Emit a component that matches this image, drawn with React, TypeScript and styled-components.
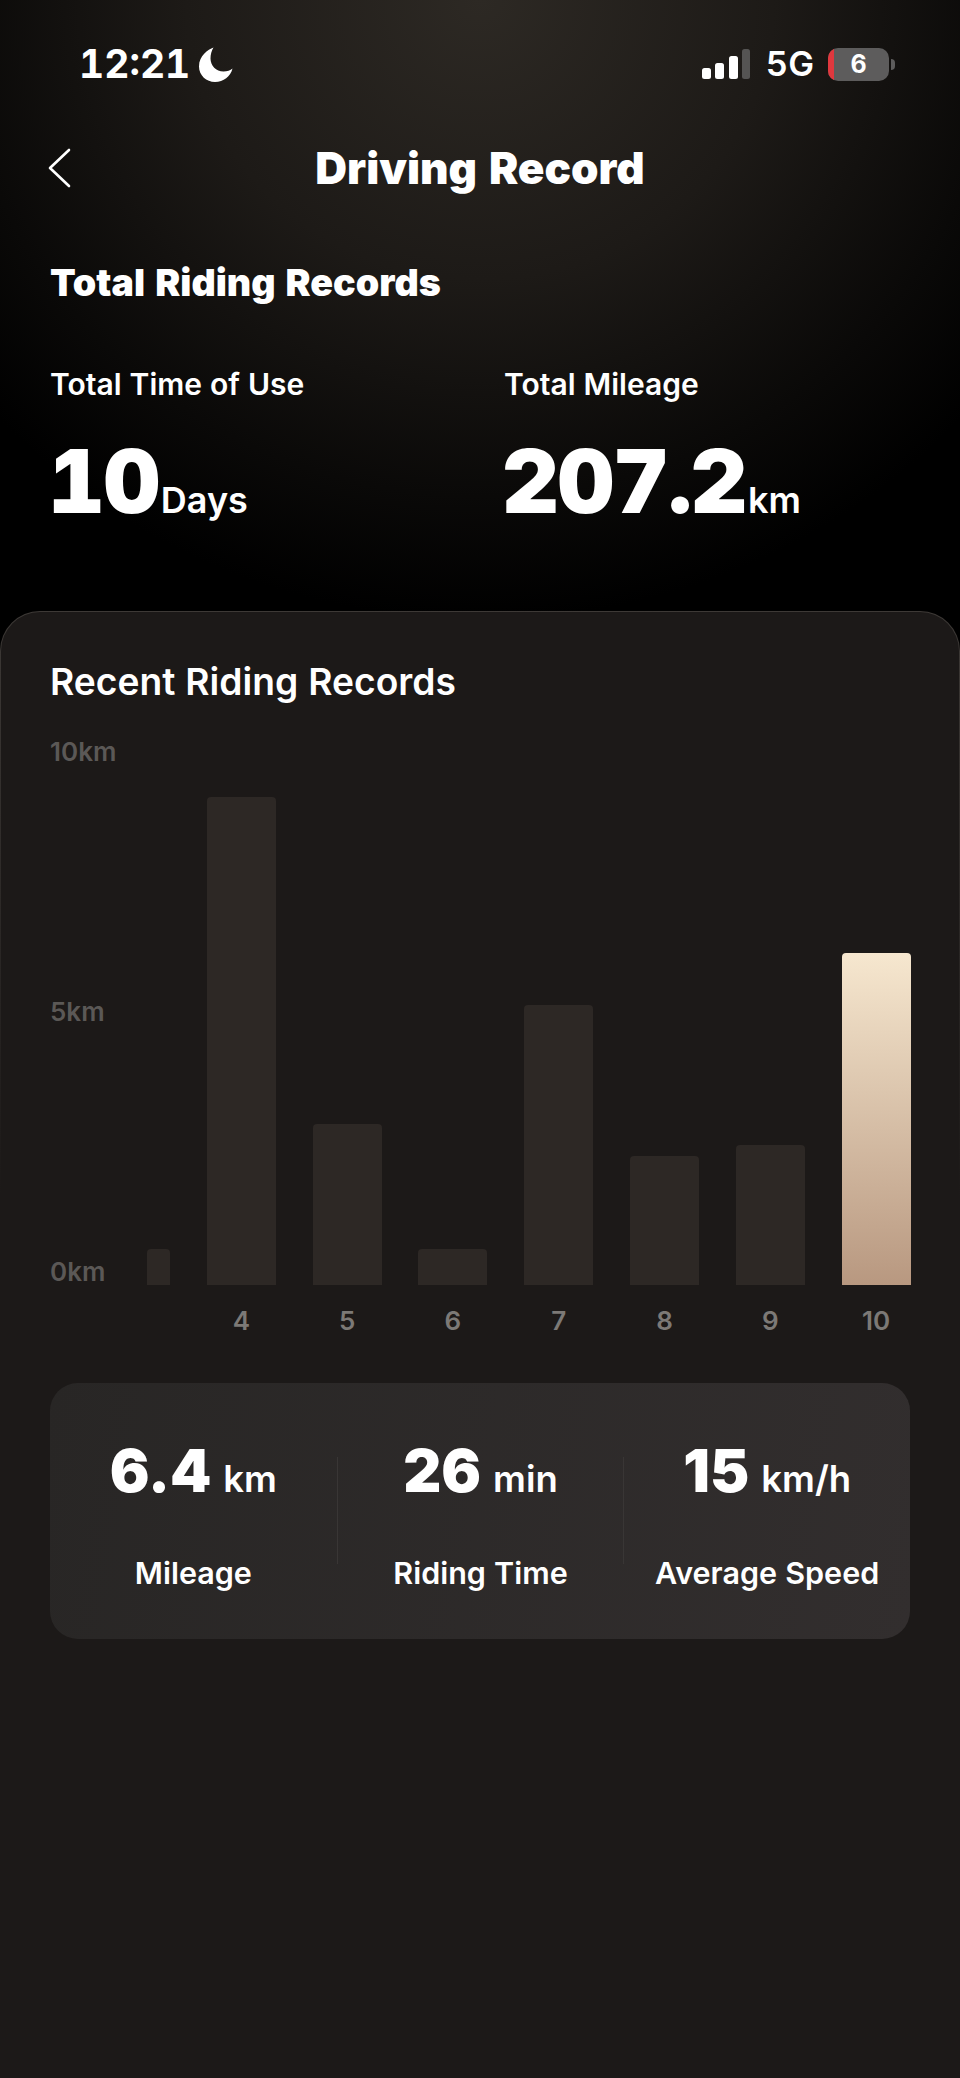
import React from 'react';
import styled, { createGlobalStyle } from 'styled-components';

const GlobalStyle = createGlobalStyle`
  html, body {
    margin: 0;
    padding: 0;
    background: #1c1918;
  }
  * {
    box-sizing: border-box;
  }
`;

const Page = styled.div`
  width: 960px;
  height: 2078px;
  display: flex;
  flex-direction: column;
  color: #fff;
  font-family: Inter, "Liberation Sans", sans-serif;
  font-variant-numeric: tabular-nums;
  background: #000 radial-gradient(ellipse 68% 100% at 50% 0%, #2d2924 0%, #1d1a17 45%, #0a0908 80%, #000 100%) no-repeat;
  background-size: 100% 620px;
`;

const StatusBar = styled.div`
  height: 134px;
  padding: 47px 65px 0 79px;
  display: flex;
  justify-content: space-between;
  align-items: flex-start;
`;

const TimeGroup = styled.div`
  display: flex;
  align-items: center;
  gap: 9px;
  height: 34px;
`;

const Clock = styled.span`
  font-size: 39px;
  font-weight: 700;
  line-height: 34px;
`;

const StatusIcons = styled.div`
  display: flex;
  align-items: center;
  height: 34px;
`;

const Network = styled.span`
  font-size: 34.5px;
  font-weight: 600;
  line-height: 34px;
  margin: 0 14px 0 16px;
`;

const Battery = styled.div`
  position: relative;
  width: 61px;
  height: 33px;
  border-radius: 10px;
  overflow: hidden;
  background: #5d5c5c;
  display: flex;
  align-items: center;
  justify-content: center;
  font-size: 25px;
  font-weight: 700;
`;

const BatteryLevel = styled.div`
  position: absolute;
  left: 0;
  top: 0;
  bottom: 0;
  width: 6px;
  background: #e0383e;
`;

const BatteryNub = styled.div`
  width: 4px;
  height: 11px;
  margin-left: 2px;
  border-radius: 0 4px 4px 0;
  background: #5d5c5c;
`;

const NavBar = styled.div`
  height: 68px;
  padding-left: 47px;
  display: flex;
  align-items: center;
  position: relative;
`;

const NavTitle = styled.h1`
  position: absolute;
  left: 0;
  right: 0;
  margin: 0;
  text-align: center;
  font-size: 44px;
  font-weight: 900;
  line-height: 68px;
`;

const Totals = styled.section`
  padding: 0 50px;
  height: 409px;
`;

const SectionTitle = styled.h2`
  margin: 56px 0 0;
  font-size: 37.6px;
  font-weight: 900;
  line-height: 50px;
`;

const TotalsRow = styled.div`
  margin-top: 58px;
  display: grid;
  grid-template-columns: 454px 1fr;
`;

const TotalLabel = styled.div`
  font-size: 30px;
  font-weight: 600;
  line-height: 36px;
`;

const TotalValue = styled.div`
  margin: 31px 0 0 -2px;
  display: flex;
  align-items: baseline;
  gap: 2px;
  font-size: 88px;
  font-weight: 900;
  line-height: 96px;
  letter-spacing: -1.3px;
`;

const TotalUnit = styled.span`
  font-size: 36px;
  font-weight: 600;
  line-height: 40px;
  letter-spacing: 0;
`;

const Card = styled.section`
  flex: 1;
  padding: 46px 49px 0;
  border: 1px solid transparent;
  border-bottom: 0;
  border-radius: 40px 40px 0 0;
  background:
    linear-gradient(#1c1918, #1c1918) padding-box,
    linear-gradient(#3d3936, #1c1918 40%) border-box;
`;

const CardTitle = styled.h2`
  margin: 0;
  font-size: 37.2px;
  font-weight: 600;
  line-height: 48px;
`;

const Chart = styled.div`
  margin-top: 31px;
  display: grid;
  grid-template-columns: 97px 1fr;
`;

const YAxis = styled.div`
  height: 550px;
  display: flex;
  flex-direction: column;
  justify-content: space-between;
  font-size: 26px;
  font-weight: 600;
  font-variant-numeric: proportional-nums;
  line-height: 30px;
  color: #5b5856;
`;

const Bars = styled.div`
  height: 548px;
  display: flex;
  align-items: flex-end;
  gap: 36.8px;
`;

const Bar = styled.div<{ $height: number; $clipped?: boolean; $active?: boolean }>`
  width: ${(p) => (p.$clipped ? 23 : 69)}px;
  height: ${(p) => p.$height}px;
  border-radius: 4px 4px 0 0;
  background: ${(p) => (p.$active ? 'linear-gradient(#f6e7cf, #b89880)' : '#2d2825')};
`;

const XAxis = styled.div`
  grid-column: 2;
  margin-top: 19px;
  display: flex;
  gap: 36.8px;
  padding-left: 59.8px;
`;

const XLabel = styled.div`
  width: 69px;
  text-align: center;
  font-size: 26px;
  font-weight: 600;
  font-variant-numeric: proportional-nums;
  line-height: 30px;
  color: #7c7976;
`;

const StatPanel = styled.div`
  margin-top: 47px;
  height: 256px;
  padding-top: 74px;
  display: grid;
  grid-template-columns: repeat(3, 1fr);
  border-radius: 28px;
  background: linear-gradient(100deg, #282625, #322e2e);
`;

const Stat = styled.div<{ $divider?: boolean }>`
  height: 107px;
  display: flex;
  flex-direction: column;
  align-items: center;
  border-left: ${(p) => (p.$divider ? '1px solid #393635' : '0')};
`;

const StatValue = styled.div`
  display: flex;
  align-items: baseline;
  gap: 12px;
  margin-top: -20px;
  font-size: 59px;
  font-weight: 900;
  font-variant-numeric: proportional-nums;
  line-height: 68px;
`;

const StatUnit = styled.span`
  font-size: 36.5px;
  font-weight: 600;
`;

const StatLabel = styled.div`
  margin-top: 41px;
  font-size: 30.5px;
  font-weight: 600;
  line-height: 38px;
  white-space: nowrap;
`;

const bars = [
  { height: 36, clipped: true },
  { height: 488 },
  { height: 161 },
  { height: 36 },
  { height: 280 },
  { height: 129 },
  { height: 140 },
  { height: 332, active: true },
];

const stats = [
  { value: '6.4', unit: 'km', label: 'Mileage' },
  { value: '26', unit: 'min', label: 'Riding Time' },
  { value: '15', unit: 'km/h', label: 'Average Speed' },
];

const SignalIcon = () => (
  <svg width="48" height="30" viewBox="0 0 48 30">
    <rect x="0" y="19" width="9" height="11" rx="2.5" fill="#fff" />
    <rect x="13" y="14" width="9" height="16" rx="2.5" fill="#fff" />
    <rect x="27" y="7" width="9" height="23" rx="2.5" fill="#fff" />
    <rect x="40" y="0" width="8" height="30" rx="2.5" fill="#555453" />
  </svg>
);

const MoonIcon = () => (
  <svg width="34" height="35" viewBox="0 0 34 35">
    <path
      d="M14.5 0.5C9 2.5 0 8.5 0 19.5C0 28.5 7.5 35 16 35C24.5 35 31.5 29.5 33.5 21.5C31.5 23.5 28 24.5 24.5 24.5C17 24.5 11.5 18.5 11.5 11.5C11.5 7.5 12.5 3.5 14.5 0.5Z"
      fill="#fff"
    />
  </svg>
);

const BackIcon = () => (
  <svg width="24" height="40" viewBox="0 0 24 40" fill="none">
    <path d="M22 2L3 20L22 38" stroke="#fff" strokeWidth="2.6" strokeLinecap="round" strokeLinejoin="round" />
  </svg>
);

export default function App() {
  return (
    <Page>
      <GlobalStyle />
      <StatusBar>
        <TimeGroup>
          <Clock>12:21</Clock>
          <MoonIcon />
        </TimeGroup>
        <StatusIcons>
          <SignalIcon />
          <Network>5G</Network>
          <Battery>
            <BatteryLevel />
            6
          </Battery>
          <BatteryNub />
        </StatusIcons>
      </StatusBar>
      <NavBar>
        <BackIcon />
        <NavTitle>Driving Record</NavTitle>
      </NavBar>
      <Totals>
        <SectionTitle>Total Riding Records</SectionTitle>
        <TotalsRow>
          <div>
            <TotalLabel>Total Time of Use</TotalLabel>
            <TotalValue>
              10<TotalUnit>Days</TotalUnit>
            </TotalValue>
          </div>
          <div>
            <TotalLabel>Total Mileage</TotalLabel>
            <TotalValue>
              207.2<TotalUnit>km</TotalUnit>
            </TotalValue>
          </div>
        </TotalsRow>
      </Totals>
      <Card>
        <CardTitle>Recent Riding Records</CardTitle>
        <Chart>
          <YAxis>
            <div>10km</div>
            <div>5km</div>
            <div>0km</div>
          </YAxis>
          <Bars>
            {bars.map((b, i) => (
              <Bar key={i} $height={b.height} $clipped={b.clipped} $active={b.active} />
            ))}
          </Bars>
          <XAxis>
            {['4', '5', '6', '7', '8', '9', '10'].map((d) => (
              <XLabel key={d}>{d}</XLabel>
            ))}
          </XAxis>
        </Chart>
        <StatPanel>
          {stats.map((s, i) => (
            <Stat key={s.label} $divider={i > 0}>
              <StatValue>
                {s.value}
                <StatUnit>{s.unit}</StatUnit>
              </StatValue>
              <StatLabel>{s.label}</StatLabel>
            </Stat>
          ))}
        </StatPanel>
      </Card>
    </Page>
  );
}
